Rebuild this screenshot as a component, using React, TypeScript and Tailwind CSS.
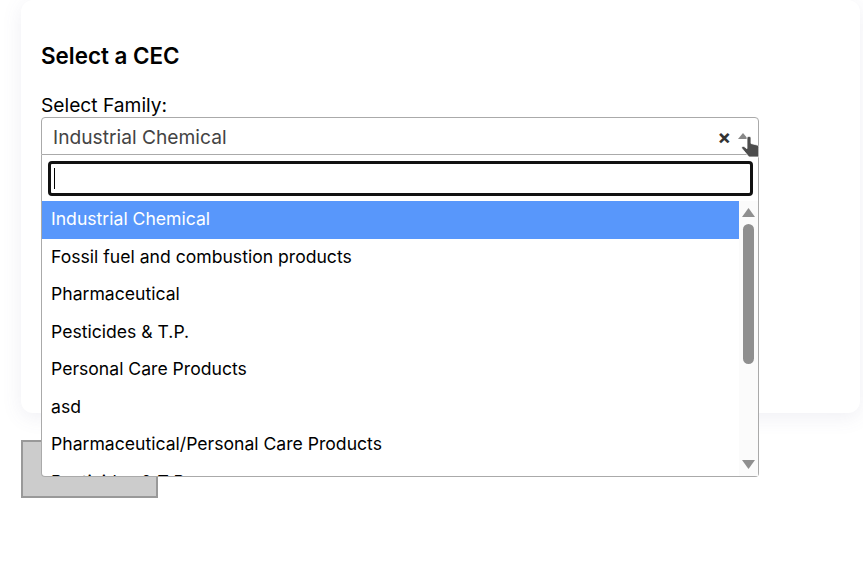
const families = [
  "Industrial Chemical",
  "Fossil fuel and combustion products",
  "Pharmaceutical",
  "Pesticides & T.P.",
  "Personal Care Products",
  "asd",
  "Pharmaceutical/Personal Care Products",
  "Pesticides & T.P.",
];

function FamilyDropdown() {
  return (
    <div className="absolute left-0 right-0 top-[38px] z-10 flex h-[322px] flex-col rounded-b-[4px] border border-t-0 border-[#aaaaaa] bg-white">
      {/* Search box */}
      <div className="p-[6px] pb-[5px]">
        <div className="flex h-[35px] w-[705px] items-center rounded-[4px] border-[3px] border-[#111111] bg-white pl-[3px]">
          <span className="h-[21px] w-px bg-black" />
        </div>
      </div>

      {/* Options with scrollbar */}
      <div className="flex min-h-0 flex-1">
        <ul className="min-w-0 flex-1 overflow-hidden">
          {families.map((name, i) => (
            <li
              key={i}
              className={`flex h-[37.5px] shrink-0 items-center pb-[1px] pl-[9px] text-[17.6px] ${
                i === 0 ? "bg-[#5897fb] text-white" : "text-black"
              }`}
            >
              {name}
            </li>
          ))}
        </ul>
        <div className="flex w-[19px] flex-col items-center bg-[#fbfbfb] pb-[7px] pt-[7px]">
          <svg width="13" height="9" viewBox="0 0 13 9" className="shrink-0">
            <path d="M6.5 0 13 9H0z" fill="#8f8f8f" />
          </svg>
          <div className="mt-[7px] h-[140px] w-[11px] rounded-[6px] bg-[#8f8f8f]" />
          <svg width="13" height="9" viewBox="0 0 13 9" className="mt-auto shrink-0">
            <path d="M6.5 9 13 0H0z" fill="#8f8f8f" />
          </svg>
        </div>
      </div>
    </div>
  );
}

function HandCursor() {
  return (
    <svg
      width="19"
      height="22"
      viewBox="0 0 19 22"
      className="absolute left-[700px] top-[19px] z-20"
    >
      <path
        d="M6 2c0-2 4-2 4 0v5.5l6 1.5c1.2.3 1.8 1 1.8 2.2V21H8L1 12.5c-.9-1.3.6-2.8 2-2l3 2.2z"
        fill="#4d4d4d"
        stroke="#ffffff"
        strokeWidth="0.8"
      />
    </svg>
  );
}

export default function App() {
  return (
    <div className="h-[567px] overflow-hidden bg-white pl-[21px] pr-[3px] font-['Inter',sans-serif] text-black">
      <div className="h-[413px] rounded-xl bg-white px-5 pt-[30px] shadow-[0_4px_20px_rgba(100,100,150,0.1)]">
        <h2 className="text-[22.4px] leading-[52px] font-semibold">Select a CEC</h2>
        <label className="mt-[12px] block text-[19.2px] leading-[22px]">Select Family:</label>

        <div className="relative mt-[1px] w-[718px]">
          {/* Select control */}
          <div className="flex h-[38px] items-center rounded-t-[4px] border border-[#aaaaaa] bg-white pl-[11px] pr-[10px] pt-[2px] text-[19.2px] text-[#444444]">
            <span className="flex-1">Industrial Chemical</span>
            <span className="text-[20px] font-bold text-[#333333]">×</span>
            <svg width="10" height="6" viewBox="0 0 10 6" className="ml-[7px] mb-[3px]">
              <path d="M5 0 10 6H0z" fill="#888888" />
            </svg>
          </div>
          <FamilyDropdown />
          <HandCursor />
        </div>
      </div>

      <button className="mt-[27px] block h-[58px] w-[137px] border-2 border-[#999999] bg-[#cccccc]" />
    </div>
  );
}
